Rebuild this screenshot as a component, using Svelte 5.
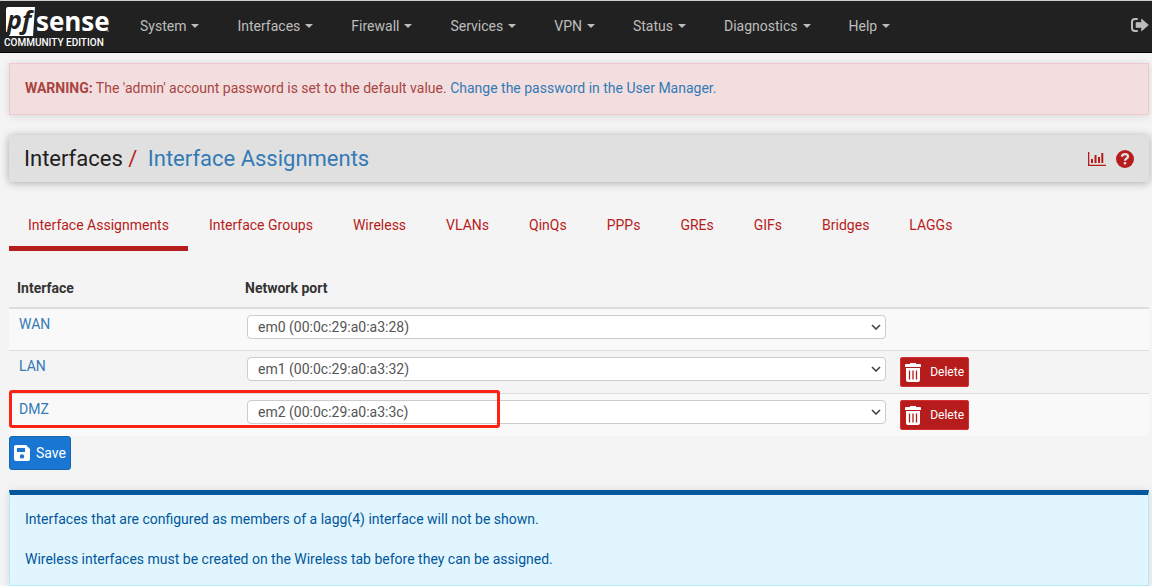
<script>
  const menu = ['System', 'Interfaces', 'Firewall', 'Services', 'VPN', 'Status', 'Diagnostics', 'Help'];
  const tabs = ['Interface Assignments', 'Interface Groups', 'Wireless', 'VLANs', 'QinQs', 'PPPs', 'GREs', 'GIFs', 'Bridges', 'LAGGs'];
  const ports = ['em0 (00:0c:29:a0:a3:28)', 'em1 (00:0c:29:a0:a3:32)', 'em2 (00:0c:29:a0:a3:3c)'];
  let rows = $state([
    { name: 'WAN', port: ports[0], removable: false },
    { name: 'LAN', port: ports[1], removable: true },
    { name: 'DMZ', port: ports[2], removable: true, marked: true }
  ]);
</script>

<header>
  <a class="logo" href="#home" aria-label="pfSense Community Edition">
    <svg width="108" height="44" viewBox="0 0 108 44">
      <path d="M4 2H31L29 31H5L6 27H2V5Q2 2 4 2Z" fill="#fff" />
      <text x="3" y="24" class="pf">p</text>
      <text x="18" y="24" class="pf">f</text>
      <text x="32" y="26" class="sense">sense</text>
      <circle cx="104" cy="26" r="1" fill="#777" />
      <text x="0" y="41" class="edition">COMMUNITY EDITION</text>
    </svg>
  </a>
  <nav>
    {#each menu as item}
      <button type="button">{item}<i class="caret"></i></button>
    {/each}
  </nav>
  <a class="logout" href="#logout" aria-label="Log out">
    <svg width="18" height="14" viewBox="0 0 18 14">
      <path d="M6 1H4Q1 1 1 4V10Q1 13 4 13H6" fill="none" stroke="currentColor" stroke-width="2" stroke-linecap="round" />
      <path d="M5 4.5H10.500V1L17.500 7L10.500 13V9.500H5Z" fill="currentColor" stroke="currentColor" stroke-width=".6" stroke-linejoin="round" />
    </svg>
  </a>
</header>

<main>
  <div class="alert danger" role="alert">
    <strong>WARNING:</strong> The 'admin' account password is set to the default value. <a href="#users">Change the password in the User Manager.</a>
  </div>

  <div class="title">
    <h1>Interfaces <span class="slash">/</span> <a href="#assignments">Interface Assignments</a></h1>
    <div class="tools">
      <a href="#status" aria-label="Interface status">
        <svg width="18" height="14" viewBox="0 0 18 14" fill="currentColor">
          <path d="M0 0H1.300V12.700H18V14H0ZM3 7H5V11H3ZM6.500 3H8.500V11H6.500ZM10 5H12V11H10ZM13.300 1H15.300V11H13.300Z" />
        </svg>
      </a>
      <a href="#help" aria-label="Help">
        <svg width="18" height="18" viewBox="0 0 18 18">
          <circle cx="9" cy="9" r="9" fill="currentColor" />
          <path d="M5.700 6.600Q6.500 4.100 9 4.100Q12 4.100 12 6.500Q12 7.800 10.300 8.700Q9 9.400 9 10.800" fill="none" stroke="#e0e0e0" stroke-width="2.300" />
          <path d="M7.800 12H10.200V14.400H7.800Z" fill="#e0e0e0" />
        </svg>
      </a>
    </div>
  </div>

  <nav class="tabs">
    {#each tabs as tab, i}
      <a href="#tab{i}" class:active={i === 0}>{tab}</a>
    {/each}
  </nav>

  <div class="assignments">
    <table>
      <thead>
        <tr><th>Interface</th><th class="port">Network port</th><th></th></tr>
      </thead>
      <tbody>
        {#each rows as row}
          <tr>
            <td>
              <a href="#{row.name}">{row.name}</a>
              {#if row.marked}<div class="marker"></div>{/if}
            </td>
            <td>
              <select bind:value={row.port} aria-label="{row.name} network port">
                {#each ports as port}<option value={port}>{port}</option>{/each}
              </select>
            </td>
            <td>
              {#if row.removable}
                <button type="button" class="delete">
                  <svg width="16" height="19" viewBox="0 0 16 19">
                    <path d="M5 0H11V1H15Q16 1 16 2V4H0V2Q0 1 1 1H5ZM1 5H15V17Q15 19 13 19H3Q1 19 1 17Z" fill="#fff" />
                    <path d="M4.500 7.500V16.500M8 7.500V16.500M11.500 7.500V16.500" stroke="#b71c1c" stroke-width="1.300" />
                  </svg>
                  Delete
                </button>
              {/if}
            </td>
          </tr>
        {/each}
      </tbody>
    </table>
  </div>

  <button type="button" class="save">
    <svg width="16" height="16" viewBox="0 0 16 16">
      <path fill-rule="evenodd" d="M2 0H12L16 4V14Q16 16 14 16H2Q0 16 0 14V2Q0 0 2 0ZM3 3V7H11V3ZM8 9.200A2.200 2.200 0 1 0 8 13.600A2.200 2.200 0 1 0 8 9.200Z" fill="#fff" />
    </svg>
    Save
  </button>

  <div class="alert info">
    <p>Interfaces that are configured as members of a lagg(4) interface will not be shown.</p>
    <p>Wireless interfaces must be created on the Wireless tab before they can be assigned.</p>
  </div>
</main>

<style>
  :global(body) {
    margin: 0;
    background: #f4f4f4;
    color: #333;
    font: 14px/20px Roboto, "Liberation Sans", sans-serif;
  }
  a { color: #337ab7; text-decoration: none; }
  button { font: inherit; cursor: pointer; }
  header {
    display: flex;
    align-items: center;
    height: 51px;
    background: #212121;
    border-top: 1px solid #ccd0ce;
    border-bottom: 1px solid #000;
  }
  .logo { display: flex; width: 108px; margin-left: 4px; }
  .logo svg { overflow: visible; }
  .pf { font: italic 700 25px "Open Sans", sans-serif; fill: #212121; }
  .sense { font: 700 26px "Open Sans", sans-serif; fill: #fff; }
  .edition { font: 500 10px Roboto, sans-serif; fill: #fff; }
  header nav { display: flex; flex: 1; gap: 38px; margin-left: 28px; padding-bottom: 2px; }
  header nav button {
    display: flex;
    align-items: center;
    gap: 5px;
    padding: 0;
    border: 0;
    background: none;
    color: #bdbdbd;
  }
  .caret { border: 4px solid transparent; border-top-color: currentColor; border-bottom: 0; }
  .logout { display: flex; margin-right: 3px; padding-bottom: 4px; color: #bdbdbd; }

  main { padding: 10px 3px 0 9px; }
  .alert { padding: 14px 15px 16px; border: 1px solid; box-shadow: 0 1px 8px rgba(0, 0, 0, .12); }
  .danger { color: #a94442; background: #f2dede; border-color: #efc8cf; }
  .title {
    display: flex;
    align-items: center;
    justify-content: space-between;
    margin-top: 20px;
    padding: 9px 15px;
    background: #e0e0e0;
    border-radius: 3px;
    box-shadow: 0 1px 8px rgba(0, 0, 0, .3);
  }
  h1 { margin: 0; font-size: 22px; line-height: 29px; font-weight: 400; color: #212121; }
  .slash { color: #b71c1c; margin-right: 5px; }
  .tools { display: flex; align-items: center; gap: 10px; }
  .tools a { display: flex; color: #b71c1c; }

  .tabs { display: flex; margin-top: 23px; }
  .tabs a { padding: 10px 19px 11px; border-bottom: 5px solid transparent; color: #b71c1c; margin-right: 2px; }
  .tabs .active { border-color: #b71c1c; }

  .assignments { margin-top: 21px; }
  table { width: 100%; border-collapse: separate; border-spacing: 0; table-layout: fixed; }
  th { padding: 6px 8px 9px; text-align: left; font-weight: 700; border-bottom: 2px solid #ddd; }
  th:first-child { width: 20%; box-sizing: border-box; }
  .port { width: 58%; box-sizing: border-box; }
  td { position: relative; height: 29px; padding: 6px 12px 6px 10px; line-height: 18px; vertical-align: top; border-top: 1px solid #ddd; }
  td:last-child { padding-left: 2px; }
  tbody tr:first-child td { border-top: 0; }
  tbody tr:nth-child(odd) { background: #f9f9f9; }
  select {
    display: block;
    width: 100%;
    height: 24px;
    padding: 0 10px;
    border: 1px solid #ccc;
    border-radius: 4px;
    color: #555;
    font: inherit;
    appearance: none;
    background: #fff url("data:image/svg+xml,%3Csvg xmlns='http://www.w3.org/2000/svg' width='10' height='6'%3E%3Cpath d='M1 1l4 4 4-4' fill='none' stroke='%23444' stroke-width='1.6'/%3E%3C/svg%3E") no-repeat right 4px center;
  }
  .marker {
    position: absolute;
    z-index: 1;
    top: -4px;
    left: 0;
    width: 491px;
    height: 38px;
    box-sizing: border-box;
    border: 3px solid #fc2314;
    border-radius: 3px;
    pointer-events: none;
  }
  .delete, .save { display: flex; align-items: center; color: #fff; border: 1px solid; }
  .delete {
    height: 30px;
    gap: 9px;
    padding: 0 4px;
    border-color: #d32f2f;
    border-radius: 2px;
    background: #b71c1c;
    font-size: 12px;
  }
  .save {
    height: 34px;
    gap: 6px;
    padding: 0 4px;
    border-color: #1565a8;
    border-radius: 3px;
    background: #1976d2;
  }
  .info {
    margin-top: 20px;
    color: #01579b;
    background: #e1f5fe;
    border-color: #b2ebf2;
    border-top: 5px solid #01579b;
  }
  .info p { margin: 0 0 20px; }
  .info p:last-child { margin: 0; }
</style>
